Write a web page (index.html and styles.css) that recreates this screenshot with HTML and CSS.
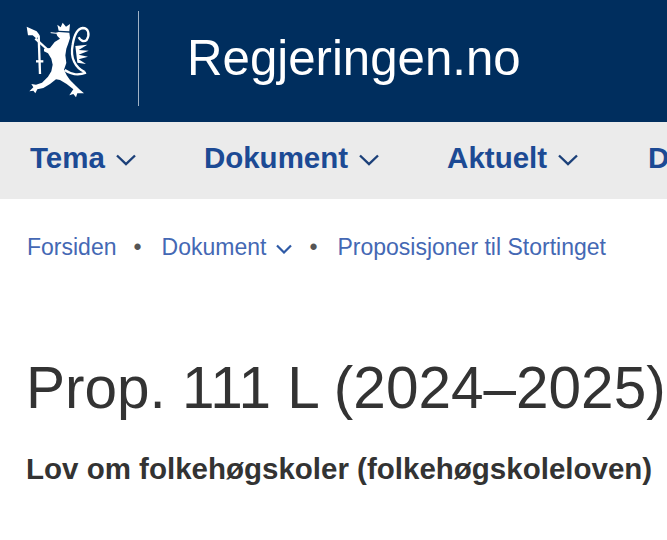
FILE: index.html
```html
<!DOCTYPE html>
<html lang="no">
<head>
    <meta charset="UTF-8">
    <meta name="viewport" content="width=device-width, initial-scale=1.0">
    <title>Regjeringen.no</title>
    <link rel="stylesheet" href="styles.css">
</head>
<body>
    <div class="header">
        <svg class="logo" width="72" height="84" viewBox="0 0 216 252" fill="#fff">
            <!-- axe -->
            <path d="M20 26 L50 40 L58 50 L50 62 L38 52 L24 52 Z"/>
            <path class="logo-line" d="M56 52 L60 168"/>
            <path class="logo-line" d="M46 62 L84 96"/>
            <path class="logo-line" d="M48 130 L70 130"/>
            <!-- crown -->
            <path d="M112 20 L122 28 L128 14 L138 26 L150 18 L148 40 L116 38 Z"/>
            <path class="logo-mouth" d="M92 44 L110 46"/>
            <!-- lion -->
            <path d="M108 44 L116 42 L148 44 L150 60 L145 76 L139 92 L136 112 L139 135 L132 155 L140 172 L150 186 L168 204 L178 214 L192 226 L172 226 L168 238 L160 228 L148 232 L160 214 L140 198 L120 186 L108 184 L90 198 L70 210 L52 214 L46 226 L40 218 L28 220 L40 208 L34 198 L48 200 L66 194 L84 176 L94 160 L98 140 L94 122 L84 106 L72 100 L72 92 L90 90 L104 72 L120 62 L112 54 Z"/>
            <!-- tail -->
            <path class="logo-line" d="M134 156 C158 172 176 172 198 164"/>
            <path class="logo-line" d="M194 162 C166 150 150 120 158 80 C162 55 172 32 188 30 C206 30 210 50 200 66 C190 74 180 66 176 58"/>
            <path d="M166 84 L202 80 L176 96 L206 98 L176 110 L204 116 L176 124 L198 138 L172 134 Z"/>
        </svg>
        <div class="divider"></div>
        <div class="site-name">Regjeringen.no</div>
    </div>

    <div class="nav">
        <a href="#" class="nav-item">Tema
            <svg width="20" height="12" viewBox="0 0 20 12"><path d="M1 1.5 L10 10 L19 1.5"/></svg>
        </a>
        <a href="#" class="nav-item">Dokument
            <svg width="20" height="12" viewBox="0 0 20 12"><path d="M1 1.5 L10 10 L19 1.5"/></svg>
        </a>
        <a href="#" class="nav-item">Aktuelt
            <svg width="20" height="12" viewBox="0 0 20 12"><path d="M1 1.5 L10 10 L19 1.5"/></svg>
        </a>
        <a href="#" class="nav-item nav-last">Departementer</a>
    </div>

    <div class="breadcrumb">
        <a href="#">Forsiden</a>
        <span class="dot">•</span>
        <a href="#">Dokument</a>
        <svg class="crumb-arrow" width="16" height="10" viewBox="0 0 16 10"><path d="M1 1.5 L8 8.5 L15 1.5"/></svg>
        <span class="dot">•</span>
        <a href="#">Proposisjoner til Stortinget</a>
    </div>

    <div class="content">
        <h1>Prop. 111 L (2024–2025)</h1>
        <p class="subtitle">Lov om folkehøgskoler (folkehøgskoleloven)</p>
    </div>
</body>
</html>
```

FILE: styles.css
```css
* {
    box-sizing: border-box;
    margin: 0;
    padding: 0;
}

html, body {
    overflow: hidden;
}

body {
    font-family: "Liberation Sans", Arial, sans-serif;
    background-color: #fff;
    color: #333;
    height: 540px;
}

.header {
    background-color: #002e5e;
    height: 122px;
    display: flex;
    align-items: center;
    padding-left: 20px;
}

.logo {
    flex-shrink: 0;
    margin-top: -3px;
}

.logo-line {
    fill: none;
    stroke: #fff;
    stroke-width: 7;
}

.logo-mouth {
    fill: none;
    stroke: #fff;
    stroke-width: 3;
}

.divider {
    width: 1px;
    height: 95px;
    background-color: #9fb2c6;
    margin-left: 46px;
    margin-top: -6px;
}

.site-name {
    color: #fff;
    font-size: 49.2px;
    margin-left: 48px;
    margin-top: -8px;
    white-space: nowrap;
}

.nav {
    background-color: #ebebeb;
    height: 77px;
    display: flex;
    align-items: center;
    gap: 68px;
    padding: 0 0 6px 30px;
    white-space: nowrap;
}

.nav-item {
    color: #1c4a94;
    font-size: 29.5px;
    font-weight: bold;
    text-decoration: none;
    display: flex;
    align-items: center;
    gap: 11px;
    flex-shrink: 0;
}

.nav-item svg {
    margin-top: 4px;
}

.nav-item svg path {
    fill: none;
    stroke: #1c4079;
    stroke-width: 2.4;
}

.nav-last {
    margin-left: 2px;
}

.breadcrumb {
    display: flex;
    align-items: center;
    padding: 35px 0 0 27px;
    font-size: 23px;
    white-space: nowrap;
}

.breadcrumb a {
    color: #4468b4;
    text-decoration: none;
}

.dot {
    color: #555;
    margin: 0 20px 0 17px;
}

.crumb-arrow {
    margin-left: 10px;
    margin-top: 3px;
}

.crumb-arrow + .dot {
    margin-left: 17px;
}

.crumb-arrow path {
    fill: none;
    stroke: #2e5aa6;
    stroke-width: 2.2;
}

.content {
    padding: 94px 0 0 26px;
    white-space: nowrap;
}

h1 {
    font-size: 58.5px;
    font-weight: normal;
    line-height: 66px;
}

.subtitle {
    font-size: 29.5px;
    font-weight: bold;
    margin-top: 31px;
}
```
